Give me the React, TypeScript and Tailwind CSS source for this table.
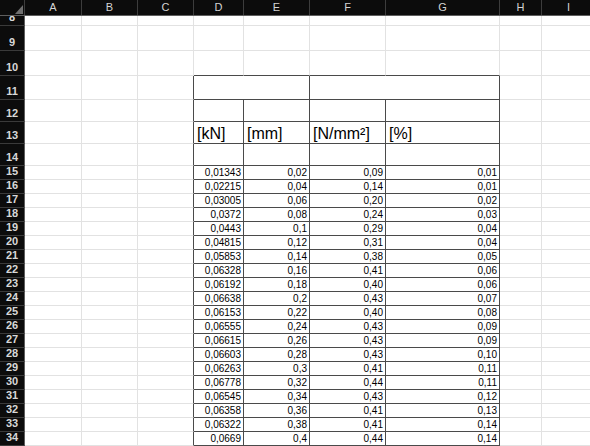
import React from "react";

const widths = [
  "w-[57px]",
  "w-[56px]",
  "w-[56px]",
  "w-[50px]",
  "w-[66px]",
  "w-[76px]",
  "w-[114px]",
  "w-[42px]",
  "w-[54px]",
];
const letters = ["A", "B", "C", "D", "E", "F", "G", "H", "I"];

const data: [string, string, string, string][] = [
  ["0,01343", "0,02", "0,09", "0,01"],
  ["0,02215", "0,04", "0,14", "0,01"],
  ["0,03005", "0,06", "0,20", "0,02"],
  ["0,0372", "0,08", "0,24", "0,03"],
  ["0,0443", "0,1", "0,29", "0,04"],
  ["0,04815", "0,12", "0,31", "0,04"],
  ["0,05853", "0,14", "0,38", "0,05"],
  ["0,06328", "0,16", "0,41", "0,06"],
  ["0,06192", "0,18", "0,40", "0,06"],
  ["0,06638", "0,2", "0,43", "0,07"],
  ["0,06153", "0,22", "0,40", "0,08"],
  ["0,06555", "0,24", "0,43", "0,09"],
  ["0,06615", "0,26", "0,43", "0,09"],
  ["0,06603", "0,28", "0,43", "0,10"],
  ["0,06263", "0,3", "0,41", "0,11"],
  ["0,06778", "0,32", "0,44", "0,11"],
  ["0,06545", "0,34", "0,43", "0,12"],
  ["0,06358", "0,36", "0,41", "0,13"],
  ["0,06322", "0,38", "0,41", "0,14"],
  ["0,0669", "0,4", "0,44", "0,14"],
];

const headers = ["[kN]", "[mm]", "[N/mm²]", "[%]"];

function rowHeight(r: number): string {
  if (r === 8) return "h-[10px]";
  if (r === 9 || r === 10) return "h-[25px]";
  if (r === 11) return "h-[24px]";
  if (r >= 12 && r <= 14) return "h-[22px]";
  return "h-[14px]";
}

function borders(r: number, c: number): string {
  const inTable = r >= 11 && c >= 3 && c <= 6;
  const rightDark = inTable || (c === 2 && r >= 11);
  const bottomDark = inTable || (r === 10 && c >= 3 && c <= 6);
  return (
    "border-r border-b " +
    (rightDark ? "border-r-[#4a4a4a] " : "border-r-[#e2e2e2] ") +
    (bottomDark ? "border-b-[#4a4a4a]" : "border-b-[#e2e2e2]")
  );
}

function Cell({ r, c }: { r: number; c: number }) {
  let content: React.ReactNode = null;
  let align = "";
  if (r === 13 && c >= 3 && c <= 6) {
    content = headers[c - 3];
    align = "items-end justify-start pl-[3px] pb-[1px] text-[16px] leading-[16px]";
  } else if (r >= 15 && c >= 3 && c <= 6) {
    content = data[r - 15][c - 3];
    align = "items-end justify-end pr-[2px] pb-[1px] text-[10px] leading-[11px]";
  }
  return (
    <div className={`flex shrink-0 overflow-hidden text-black ${widths[c]} ${borders(r, c)} ${align}`}>
      {content}
    </div>
  );
}

export default function App() {
  const rows: number[] = [];
  for (let r = 8; r <= 34; r++) rows.push(r);

  return (
    <div className="w-[590px] h-[446px] overflow-hidden bg-white font-['Liberation_Sans',Arial,sans-serif]">
      {/* column headers */}
      <div className="flex h-[16px] bg-[#0c0c0c] border-b border-b-[#5e5e5e]">
        <div className="relative w-[25px] shrink-0 border-r border-r-[#3d3d3d]">
          <svg className="absolute left-0 top-0" width="25" height="16" viewBox="0 0 25 16">
            <polygon points="15,14 23,14 23,5" fill="#6f6f6f" />
          </svg>
        </div>
        {letters.map((l, i) => (
          <div
            key={l}
            className={`flex shrink-0 items-center justify-center text-[11px] leading-none text-[#d4d4d4] border-r border-r-[#3d3d3d] ${widths[i]}`}
          >
            {l}
          </div>
        ))}
      </div>

      {rows.map((r) => (
        <div key={r} className={`flex ${rowHeight(r)}`}>
          <div className="flex w-[25px] shrink-0 items-end justify-center overflow-hidden bg-[#0c0c0c] border-r border-b border-r-[#5e5e5e] border-b-[#3a3a3a] pb-[2px] text-[11px] leading-[11px] font-bold text-[#d8d8d8]">
            {r}
          </div>
          {r === 11 ? (
            <>
              <Cell r={r} c={0} />
              <Cell r={r} c={1} />
              <Cell r={r} c={2} />
              <div className="w-[116px] shrink-0 border-r border-b border-r-[#4a4a4a] border-b-[#4a4a4a]" />
              <div className="w-[190px] shrink-0 border-r border-b border-r-[#4a4a4a] border-b-[#4a4a4a]" />
              <Cell r={r} c={7} />
              <Cell r={r} c={8} />
            </>
          ) : (
            letters.map((_, c) => <Cell key={c} r={r} c={c} />)
          )}
        </div>
      ))}
    </div>
  );
}
